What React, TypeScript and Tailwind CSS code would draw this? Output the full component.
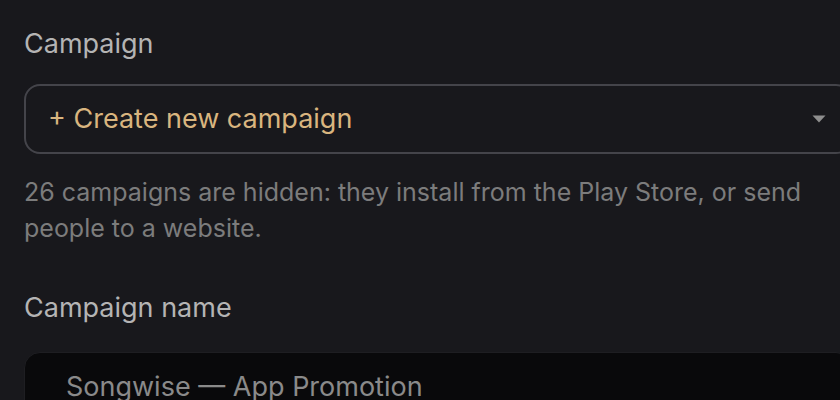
import { ChangeEvent, useState } from 'react';

const font = { fontFamily: 'Inter, "Noto Sans", sans-serif' };

export default function App() {
  const [name, setName] = useState('Songwise — App Promotion');

  return (
    <div
      className="h-[400px] w-[840px] overflow-hidden bg-[#18181c] pl-[24px] pt-[26px] antialiased"
      style={font}
    >
      <div className="w-[828px]">
        {/* Campaign picker */}
        <label className="block text-[27px] leading-[36px] text-[#b4b4b4]">Campaign</label>
        <button className="mt-[22px] flex h-[70px] w-full items-center justify-between rounded-[16px] border-2 border-[#44444a] bg-[#18181c] pl-[22px] pr-[24px] text-left">
          <span className="text-[27px] text-[#d9b57f]">+ Create new campaign</span>
          <svg width="14" height="8" viewBox="0 0 14 8" className="shrink-0">
            <path d="M0.5 0.5 L13.5 0.5 L7 7.5 Z" fill="#8e8e8e" />
          </svg>
        </button>
        <p className="mt-[20px] text-[25px] leading-[36px] text-[#7c7c7c]">
          26 campaigns are hidden: they install from the Play Store, or send people to a website.
        </p>

        {/* Campaign name */}
        <label className="mt-[44px] block text-[27px] leading-[36px] text-[#b4b4b4]">Campaign name</label>
        <div className="mt-[26px] flex h-[70px] w-full items-center rounded-[16px] border border-[#1e1e22] bg-[#09090b] pl-[41px]">
          <input
            value={name}
            onChange={(e: ChangeEvent<HTMLInputElement>) => setName(e.target.value)}
            className="w-full bg-transparent text-[27px] text-[#8a8a8a] outline-none"
            style={font}
          />
        </div>
      </div>
    </div>
  );
}
